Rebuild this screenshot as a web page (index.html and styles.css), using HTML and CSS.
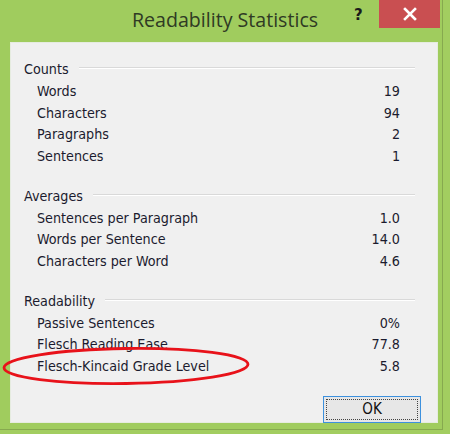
FILE: index.html
```html
<!DOCTYPE html>
<html>
<head>
<meta charset="utf-8">
<link rel="stylesheet" href="styles.css">
</head>
<body>
<div class="window">
  <div class="titlebar">
    <div class="title">Readability Statistics</div>
    <div class="help">?</div>
    <div class="close">
      <svg width="14" height="14" viewBox="0 0 14 14"><path d="M2 2 L12 12 M12 2 L2 12" stroke="#fff" stroke-width="2.6" stroke-linecap="square"/></svg>
    </div>
  </div>
  <div class="panel">
    <div class="section">
      <div class="head"><span>Counts</span><i class="rule"></i></div>
      <div class="row"><span>Words</span><span>19</span></div>
      <div class="row"><span>Characters</span><span>94</span></div>
      <div class="row"><span>Paragraphs</span><span>2</span></div>
      <div class="row"><span>Sentences</span><span>1</span></div>
    </div>
    <div class="section">
      <div class="head"><span>Averages</span><i class="rule"></i></div>
      <div class="row"><span>Sentences per Paragraph</span><span>1.0</span></div>
      <div class="row"><span>Words per Sentence</span><span>14.0</span></div>
      <div class="row"><span>Characters per Word</span><span>4.6</span></div>
    </div>
    <div class="section">
      <div class="head"><span>Readability</span><i class="rule"></i></div>
      <div class="row"><span>Passive Sentences</span><span>0%</span></div>
      <div class="row"><span>Flesch Reading Ease</span><span>77.8</span></div>
      <div class="row"><span>Flesch-Kincaid Grade Level</span><span>5.8</span></div>
    </div>
    <div class="actions"><button class="ok"><span>OK</span></button></div>
  </div>
  <svg class="mark" width="260" height="60" viewBox="0 0 260 60">
    <ellipse cx="126" cy="30" rx="122" ry="17.5" fill="none" stroke="#e8121a" stroke-width="2.8" transform="rotate(-0.8 126 30)"/>
  </svg>
</div>
</body>
</html>
```
FILE: styles.css
```css
html, body {
  margin: 0;
  padding: 0;
}
body {
  width: 450px;
  height: 434px;
  background: #a2cd60;
  overflow: hidden;
  font-family: "DejaVu Sans Condensed", "DejaVu Sans", sans-serif;
}
.window {
  position: relative;
  width: 443px;
  height: 430px;
  box-sizing: border-box;
  border-right: 1px solid #86a94f;
  border-bottom: 1px solid #86a94f;
  background: #a0cc5e;
}
.titlebar {
  height: 42px;
  display: flex;
  align-items: flex-start;
}
.title {
  margin-left: 132px;
  margin-top: 7px;
  width: 222px;
  font-family: "Open Sans", sans-serif;
  font-size: 19.6px;
  line-height: 26px;
  color: #2f3a24;
}
.help {
  width: 24px;
  margin-top: 5px;
  font-family: "DejaVu Sans", sans-serif;
  font-weight: bold;
  font-size: 15px;
  line-height: 20px;
  color: #1a1a1a;
}
.close {
  margin-left: 1px;
  width: 61px;
  height: 28px;
  background: #c94f51;
  display: flex;
  align-items: center;
  justify-content: center;
}
.panel {
  margin-left: 10px;
  width: 428px;
  height: 381px;
  box-sizing: border-box;
  background: #f0f0f0;
  border: 1px solid #e6ece0;
  padding: 16px 16px 8px 13px;
  display: flex;
  flex-direction: column;
  gap: 18px;
  font-size: 14.2px;
  color: #1b1b2e;
}
.head {
  display: flex;
  align-items: center;
  height: 21.75px;
  margin-right: 6px;
}
.rule {
  flex: 1;
  height: 0;
  border-top: 1px solid #d9d9d9;
  border-bottom: 1px solid #ffffff;
  margin-left: 10px;
  margin-top: -4px;
}
.row {
  display: flex;
  justify-content: space-between;
  height: 21.75px;
  line-height: 21.75px;
  padding-left: 13px;
  margin-right: 21px;
}
.head span {
  line-height: 21.75px;
}
.actions {
  margin-top: auto;
  display: flex;
  justify-content: flex-end;
}
.ok {
  width: 98px;
  height: 27px;
  box-sizing: border-box;
  border: 1px solid #3d91de;
  background: #e7e7e7;
  padding: 2px;
  font-family: inherit;
  font-size: 15px;
  color: #111;
}
.ok span {
  display: flex;
  align-items: center;
  justify-content: center;
  height: 100%;
  border: 1px dotted #444;
  box-sizing: border-box;
}
.mark {
  position: absolute;
  left: 0;
  top: 336px;
}
```
